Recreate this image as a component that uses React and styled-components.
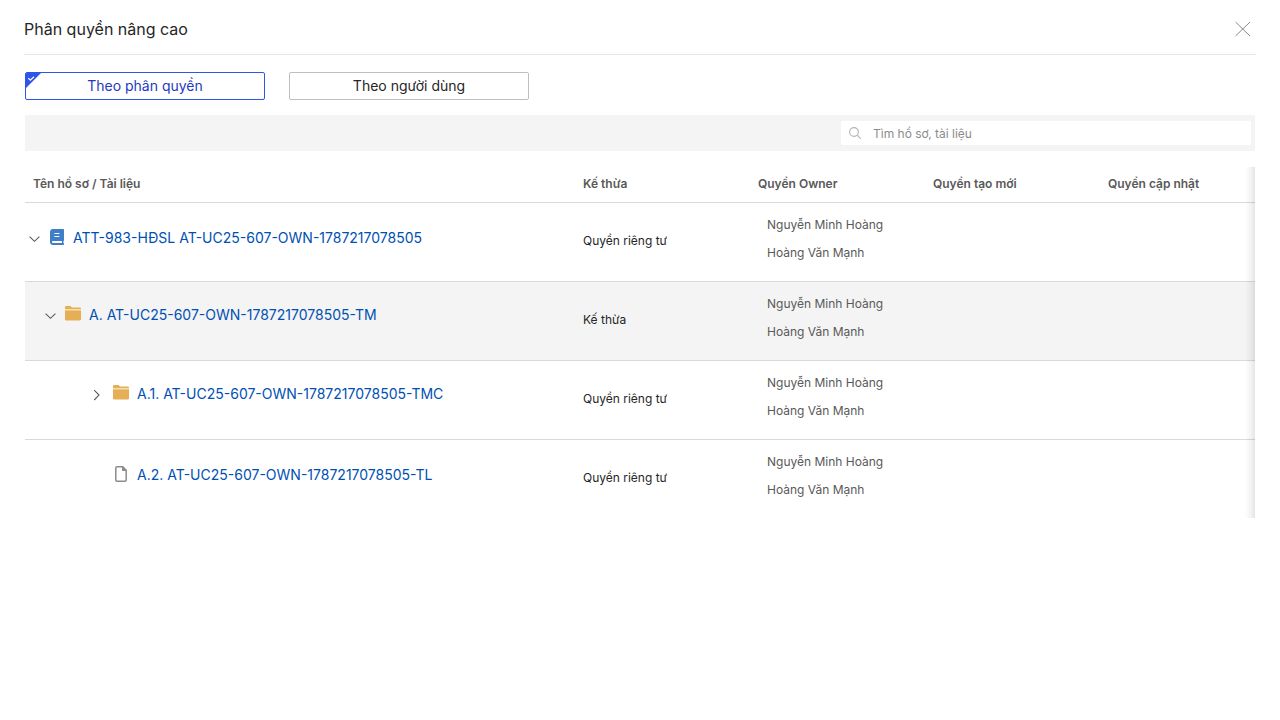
import React, { useState } from "react";
import styled, { createGlobalStyle } from "styled-components";

const GlobalStyle = createGlobalStyle`
  *, *::before, *::after { box-sizing: border-box; }
  body {
    margin: 0;
    background: #fff;
    color: #262626;
    font-family: Inter, "Liberation Sans", sans-serif;
    font-size: 12px;
    line-height: 20px;
  }
`;

const Page = styled.main`
  padding: 0 24px;
`;

const Header = styled.header`
  display: flex;
  align-items: center;
  justify-content: space-between;
  height: 55px;
  padding: 4px 5px 0 0;
  border-bottom: 1px solid #e2e8f0;
`;

const Title = styled.h1`
  margin: 0;
  font-size: 16px;
  line-height: 24px;
  font-weight: 400;
`;

const IconButton = styled.button`
  display: flex;
  padding: 0;
  border: 0;
  background: none;
  color: #595959;
  cursor: pointer;
`;

const Content = styled.div`
  padding: 17px 1px 0;
`;

const Tabs = styled.div`
  display: flex;
  gap: 24px;
  margin-bottom: 15px;
`;

const Tab = styled.button`
  position: relative;
  overflow: hidden;
  width: 240px;
  height: 28px;
  padding: 0;
  border: 1px solid ${(p) => (p.$active ? "#2f54eb" : "#bfbfbf")};
  border-radius: 2px;
  background: #fff;
  color: ${(p) => (p.$active ? "#1d39c4" : "#262626")};
  font: inherit;
  font-size: 14px;
  cursor: pointer;
`;

const CornerMark = styled.svg`
  position: absolute;
  top: 0;
  left: 0;
`;

const Toolbar = styled.div`
  display: flex;
  justify-content: flex-end;
  padding: 6px 4px;
  margin-bottom: 16px;
  background: #f4f4f4;
`;

const SearchBox = styled.label`
  display: flex;
  align-items: center;
  gap: 12px;
  width: 410px;
  height: 24px;
  padding: 0 8px;
  border-radius: 2px;
  background: #fff;
  color: #b3b3b3;
`;

const SearchInput = styled.input`
  flex: 1;
  min-width: 0;
  padding: 2px 0 0;
  border: 0;
  outline: 0;
  background: none;
  color: #262626;
  font: inherit;
  &::placeholder { color: #8c8c8c; opacity: 1; }
`;

const TableFrame = styled.div`
  position: relative;
  overflow: hidden;
  &::after {
    content: "";
    position: absolute;
    inset: 0 0 0 auto;
    width: 10px;
    background: linear-gradient(to left, rgba(0, 0, 0, 0.1), rgba(0, 0, 0, 0.04) 50%, rgba(0, 0, 0, 0));
    pointer-events: none;
  }
`;

const Table = styled.table`
  width: 100%;
  table-layout: fixed;
  border-collapse: separate;
  border-spacing: 0;
`;

const Column = styled.col`
  width: ${(p) => p.$width};
`;

const HeadCell = styled.th`
  height: 36px;
  padding: 0 8px 2px;
  border-bottom: 1px solid #d9d9d9;
  color: #595959;
  font-weight: 600;
  text-align: left;
  white-space: nowrap;
`;

const Row = styled.tr`
  background: ${(p) => (p.$shaded ? "#f4f4f4" : "#fff")};
`;

const Cell = styled.td`
  height: 79px;
  padding: 0 8px 2px;
  border-bottom: 1px solid #d9d9d9;
  vertical-align: middle;
  tr:last-child > & {
    height: 78px;
    border-bottom: 0;
  }
`;

const NameCell = styled(Cell)`
  padding: 0 4px;
`;

const NameLine = styled.div`
  display: flex;
  align-items: center;
  padding-left: ${(p) => p.$indent}px;
  padding-bottom: ${(p) => (p.$folder ? 12 : 8)}px;
`;

const Toggle = styled(IconButton)`
  width: 12px;
  padding-top: 2px;
  margin-right: 8px;
`;

const TypeIcon = styled.span`
  display: flex;
  justify-content: center;
  width: 16px;
  margin-right: 8px;
  padding-bottom: 2px;
`;

const NameLink = styled.a`
  color: #0050b3;
  font-size: 14px;
  text-decoration: none;
  white-space: nowrap;
`;

const OwnerList = styled.ul`
  display: grid;
  gap: 8px;
  margin: 0;
  padding: 0 0 4px 9px;
  list-style: none;
  color: #595959;
`;

const CloseIcon = () => (
  <svg width="16" height="16" viewBox="0 0 16 16" fill="none" stroke="currentColor" strokeWidth="0.7" aria-hidden="true">
    <path d="M.5 1 15 15M15 1 .5 15" />
  </svg>
);

const SearchIcon = () => (
  <svg width="12" height="12" viewBox="0 0 12 12" fill="none" stroke="currentColor" strokeWidth="1.1" aria-hidden="true">
    <circle cx="5" cy="5" r="4.4" />
    <path d="m8.2 8.2 3.6 3.6" />
  </svg>
);

const ChevronIcon = ({ open }) => (
  <svg width="12" height="12" viewBox="0 0 12 12" fill="none" stroke="currentColor" strokeWidth="1.1" aria-hidden="true">
    <path d={open ? "M.6 3.700 5.500 8.300l4.900-4.600" : "M1.200 1.200 6 6.100 1.200 11"} />
  </svg>
);

const BookIcon = () => (
  <svg width="14" height="16" viewBox="0 0 14 16" fill="#3f7fca" aria-hidden="true">
    <path
      fillRule="evenodd"
      d="M3 0h10c.6 0 1 .4 1 1v10.2c0 .4-.2.7-.5.8-.1.6-.1 1.500 0 2 .3.1.5.4.5.7v.3c0 .6-.4 1-1 1H3c-1.700 0-3-1.300-3-3V3c0-1.700 1.300-3 3-3ZM4.400 4v1h5V4h-5Zm0 3v1h5V7h-5ZM3 12c-.6 0-1 .4-1 1s.4 1 1 1h8.900v-2H3Z"
    />
  </svg>
);

const FolderIcon = () => (
  <svg width="16" height="16" viewBox="0 0 16 16" aria-hidden="true">
    <path fill="#e5b055" d="M0 3V1.200C0 .5.500 0 1.200 0h3.900c.4 0 .7.100.9.400L7 1.500h7.800c.7 0 1.200.5 1.200 1.200V3Z" />
    <path fill="#f6deb2" d="M0 3h16v2H0Z" />
    <path fill="#e5b055" d="M0 4.500h16v8.800c0 .7-.5 1.200-1.200 1.200H1.200c-.7 0-1.200-.5-1.200-1.200Z" />
  </svg>
);

const FileIcon = () => (
  <svg width="12" height="16" viewBox="0 0 12 16" aria-hidden="true">
    <path fill="none" stroke="#8c8c8c" strokeWidth="1.500" d="M2 .8h5.700L11.200 4.300V14c0 .7-.6 1.200-1.300 1.200H2C1.300 15.200.8 14.700.8 14V2C.8 1.300 1.300.8 2 .8Z" />
    <path fill="#8c8c8c" d="M7 .5h1L11.500 4v1H8c-.6 0-1-.4-1-1Z" />
  </svg>
);

const icons = { book: BookIcon, folder: FolderIcon, file: FileIcon };
const owners = ["Nguyễn Minh Hoàng", "Hoàng Văn Mạnh"];
const columns = [
  { label: "Tên hồ sơ / Tài liệu", width: "550px" },
  { label: "Kế thừa", width: "175px" },
  { label: "Quyền Owner", width: "175px" },
  { label: "Quyền tạo mới", width: "175px" },
  { label: "Quyền cập nhật", width: "auto" },
];
const rows = [
  { name: "ATT-983-HĐSL AT-UC25-607-OWN-1787217078505", inherit: "Quyền riêng tư", icon: "book", indent: 0, open: true },
  { name: "A. AT-UC25-607-OWN-1787217078505-TM", inherit: "Kế thừa", icon: "folder", indent: 16, open: true, shaded: true },
  { name: "A.1. AT-UC25-607-OWN-1787217078505-TMC", inherit: "Quyền riêng tư", icon: "folder", indent: 64, open: false },
  { name: "A.2. AT-UC25-607-OWN-1787217078505-TL", inherit: "Quyền riêng tư", icon: "file", indent: 84 },
];
const tabs = ["Theo phân quyền", "Theo người dùng"];

export default function App() {
  const [active, setActive] = useState(0);
  return (
    <Page>
      <GlobalStyle />
      <Header>
        <Title>Phân quyền nâng cao</Title>
        <IconButton type="button" aria-label="Đóng"><CloseIcon /></IconButton>
      </Header>
      <Content>
        <Tabs>
          {tabs.map((label, i) => (
            <Tab key={label} type="button" $active={i === active} aria-pressed={i === active} onClick={() => setActive(i)}>
              {i === active && (
                <CornerMark width="15" height="15" viewBox="0 0 15 15" aria-hidden="true">
                  <path fill="#2f54eb" d="M0 0h15L0 15Z" />
                  <path fill="none" stroke="#fff" strokeWidth="1.200" d="m2.300 5.200 2 2L8 3.700" />
                </CornerMark>
              )}
              {label}
            </Tab>
          ))}
        </Tabs>
        <Toolbar>
          <SearchBox>
            <SearchIcon />
            <SearchInput type="text" placeholder="Tìm hồ sơ, tài liệu" aria-label="Tìm hồ sơ, tài liệu" />
          </SearchBox>
        </Toolbar>
        <TableFrame>
          <Table>
            <colgroup>
              {columns.map((c) => <Column key={c.label} $width={c.width} />)}
            </colgroup>
            <thead>
              <tr>
                {columns.map((c) => <HeadCell key={c.label} scope="col">{c.label}</HeadCell>)}
              </tr>
            </thead>
            <tbody>
              {rows.map((r) => {
                const Icon = icons[r.icon];
                return (
                  <Row key={r.name} $shaded={r.shaded}>
                    <NameCell>
                      <NameLine $indent={r.indent} $folder={r.icon === "folder"}>
                        {r.open !== undefined && (
                          <Toggle type="button" aria-expanded={r.open} aria-label={r.open ? "Thu gọn" : "Mở rộng"}>
                            <ChevronIcon open={r.open} />
                          </Toggle>
                        )}
                        <TypeIcon><Icon /></TypeIcon>
                        <NameLink href="#">{r.name}</NameLink>
                      </NameLine>
                    </NameCell>
                    <Cell>{r.inherit}</Cell>
                    <Cell>
                      <OwnerList>
                        {owners.map((o) => <li key={o}>{o}</li>)}
                      </OwnerList>
                    </Cell>
                    <Cell />
                    <Cell />
                  </Row>
                );
              })}
            </tbody>
          </Table>
        </TableFrame>
      </Content>
    </Page>
  );
}
